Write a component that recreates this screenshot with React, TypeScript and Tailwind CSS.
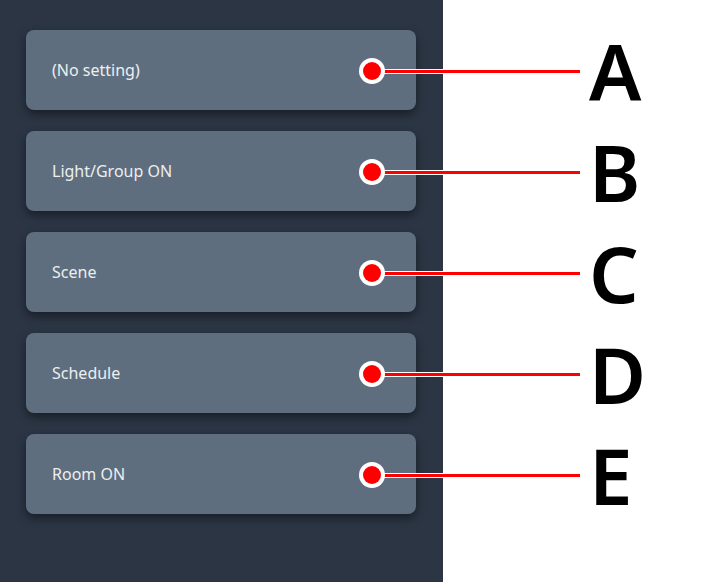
const items = [
  { label: "(No setting)", letter: "A" },
  { label: "Light/Group ON", letter: "B" },
  { label: "Scene", letter: "C" },
  { label: "Schedule", letter: "D" },
  { label: "Room ON", letter: "E" },
];

export default function App() {
  return (
    <div className="flex h-[582px] w-[703px] bg-white font-['Noto_Sans',sans-serif]">
      <div className="flex h-full w-[443px] flex-col gap-[21px] bg-[#2b3544] pl-[26px] pt-[30px]">
        {items.map((item) => (
          <div key={item.letter} className="relative h-[80px] w-[390px]">
            <div className="flex h-full w-full items-center rounded-[8px] bg-[#5f6e7e] pl-[26px] text-[16px] text-[#eceef0] shadow-[0_4px_10px_rgba(0,0,0,0.45)]">
              {item.label}
            </div>
            {/* callout */}
            <div className="absolute left-[333px] top-[28px] flex h-[26px] w-[340px] items-center">
              <div className="z-10 flex h-[26px] w-[26px] shrink-0 items-center justify-center rounded-full bg-white">
                <div className="h-[18px] w-[18px] rounded-full bg-[#ff0000]" />
              </div>
              <div className="-ml-[1px] h-[5px] w-[196px] border-y border-white bg-[#ff0000]" />
              <div className="ml-[9px] text-[78px] font-semibold leading-none text-black">{item.letter}</div>
            </div>
          </div>
        ))}
      </div>
    </div>
  );
}
